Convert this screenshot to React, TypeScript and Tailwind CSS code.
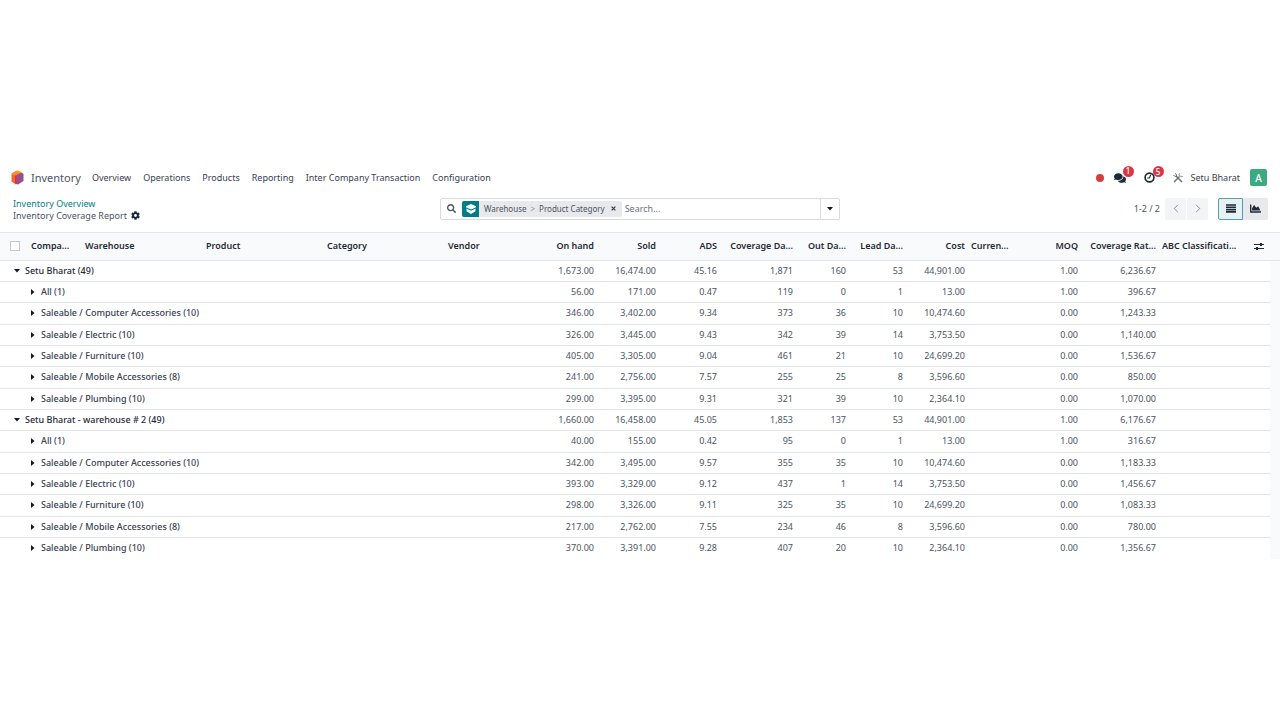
import { FaChartArea, FaCog, FaComments, FaSearch } from "react-icons/fa";

type Row = { label: string; group?: boolean; v: string[] };

const columns: { name: string; width: string; right?: boolean }[] = [
  { name: "Compa...", width: "w-[54px]" },
  { name: "Warehouse", width: "w-[121px]" },
  { name: "Product", width: "w-[121px]" },
  { name: "Category", width: "w-[121px]" },
  { name: "Vendor", width: "w-[79px]" },
  { name: "On hand", width: "w-[67px]", right: true },
  { name: "Sold", width: "w-[62px]", right: true },
  { name: "ADS", width: "w-[61px]", right: true },
  { name: "Coverage Da...", width: "w-[76px]", right: true },
  { name: "Out Da...", width: "w-[53px]", right: true },
  { name: "Lead Da...", width: "w-[57px]", right: true },
  { name: "Cost", width: "w-[62px]", right: true },
  { name: "Curren...", width: "w-[51px] pl-[6px]!" },
  { name: "MOQ", width: "w-[62px]", right: true },
  { name: "Coverage Rat...", width: "w-[78px]", right: true },
  { name: "ABC Classificati...", width: "w-[84px] pl-[6px]!" },
];

const rows: Row[] = [
  { label: "Setu Bharat (49)", group: true, v: ["1,673.00", "16,474.00", "45.16", "1,871", "160", "53", "44,901.00", "1.00", "6,236.67"] },
  { label: "All (1)", v: ["56.00", "171.00", "0.47", "119", "0", "1", "13.00", "1.00", "396.67"] },
  { label: "Saleable / Computer Accessories (10)", v: ["346.00", "3,402.00", "9.34", "373", "36", "10", "10,474.60", "0.00", "1,243.33"] },
  { label: "Saleable / Electric (10)", v: ["326.00", "3,445.00", "9.43", "342", "39", "14", "3,753.50", "0.00", "1,140.00"] },
  { label: "Saleable / Furniture (10)", v: ["405.00", "3,305.00", "9.04", "461", "21", "10", "24,699.20", "0.00", "1,536.67"] },
  { label: "Saleable / Mobile Accessories (8)", v: ["241.00", "2,756.00", "7.57", "255", "25", "8", "3,596.60", "0.00", "850.00"] },
  { label: "Saleable / Plumbing (10)", v: ["299.00", "3,395.00", "9.31", "321", "39", "10", "2,364.10", "0.00", "1,070.00"] },
  { label: "Setu Bharat - warehouse # 2 (49)", group: true, v: ["1,660.00", "16,458.00", "45.05", "1,853", "137", "53", "44,901.00", "1.00", "6,176.67"] },
  { label: "All (1)", v: ["40.00", "155.00", "0.42", "95", "0", "1", "13.00", "1.00", "316.67"] },
  { label: "Saleable / Computer Accessories (10)", v: ["342.00", "3,495.00", "9.57", "355", "35", "10", "10,474.60", "0.00", "1,183.33"] },
  { label: "Saleable / Electric (10)", v: ["393.00", "3,329.00", "9.12", "437", "1", "14", "3,753.50", "0.00", "1,456.67"] },
  { label: "Saleable / Furniture (10)", v: ["298.00", "3,326.00", "9.11", "325", "35", "10", "24,699.20", "0.00", "1,083.33"] },
  { label: "Saleable / Mobile Accessories (8)", v: ["217.00", "2,762.00", "7.55", "234", "46", "8", "3,596.60", "0.00", "780.00"] },
  { label: "Saleable / Plumbing (10)", v: ["370.00", "3,391.00", "9.28", "407", "20", "10", "2,364.10", "0.00", "1,356.67"] },
];

const menu = ["Overview", "Operations", "Products", "Reporting", "Inter Company Transaction", "Configuration"];

function Logo() {
  return (
    <svg viewBox="0 0 26 30" className="h-[15px] w-[13px]" aria-hidden="true">
      <path d="M1 7 11 1l4 0 10 6L13 15Z" fill="#fba12c" />
      <path d="M1 7 10 12v17L1 23Z" fill="#f8622d" />
      <path d="M1 7 9 3l8 3-7 6Z" fill="#fb8a2c" />
      <path d="M10 11 20 5l5 3v14l-11 7-4-1Z" fill="#98508c" />
      <path d="M8 11l3-1v18l-3-1Z" fill="#d3363c" />
    </svg>
  );
}

function Caret({ down }: { down?: boolean }) {
  return (
    <svg viewBox="0 0 6 6" className="size-[6px] shrink-0 fill-[#111827]" aria-hidden="true">
      {down ? <path d="M0 1h6L3 4.500Z" /> : <path d="M1 0v6l3.500-3Z" />}
    </svg>
  );
}

function Badge({ n }: { n: number }) {
  return (
    <span className="absolute -top-[6px] left-[9px] flex size-[11px] items-center justify-center rounded-full bg-[#dc3545] text-[8px] leading-none font-medium text-white">
      {n}
    </span>
  );
}

export default function App() {
  return (
    <div className="flex min-h-screen flex-col justify-center bg-white font-['Noto_Sans','Open_Sans',sans-serif] text-[9px] leading-[12px] text-[#4b5563]">
      <header className="flex h-[32px] items-center justify-between pr-[13px] pl-[11px]">
        <nav className="flex items-center">
          <Logo />
          <a href="#inventory" className="mr-[11px] ml-[7px] text-[11px]">Inventory</a>
          <div className="flex gap-[12px] text-[#374151]">
            {menu.map((m) => (
              <a key={m} href="#menu">{m}</a>
            ))}
          </div>
        </nav>
        <div className="flex items-center text-[#374151]">
          <span className="mr-[10px] size-[8px] rounded-full bg-[#d23f3a]" />
          <button aria-label="Messages" className="relative mr-[18px] text-[#1f2937]">
            <FaComments className="size-[12px]" />
            <Badge n={1} />
          </button>
          <button aria-label="Activities" className="relative mr-[18px] text-[#1f2937]">
            <svg viewBox="0 0 20 20" className="size-[11px]" fill="none" stroke="currentColor" strokeWidth="3" aria-hidden="true">
              <circle cx="10" cy="10" r="8" />
              <path d="m12 5-2 6H6" strokeWidth="2" />
            </svg>
            <Badge n={5} />
          </button>
          <button aria-label="Developer tools" className="mr-[8px] text-[#6b7280]">
            <svg viewBox="0 0 20 20" className="size-[10px]" fill="none" stroke="currentColor" strokeWidth="3" aria-hidden="true">
              <path d="m2 18 11-11M18 18 6 6" />
              <path d="M1 4l3 3 3-1 0-3-3-2M13 1c-2 3 0 6 6 6" strokeWidth="2" />
            </svg>
          </button>
          <a href="#user">Setu Bharat</a>
          <span className="ml-[10px] flex size-[17px] items-center justify-center rounded-[2px] bg-[#3aaa7f] text-[10px] font-medium text-white">A</span>
        </div>
      </header>

      <section className="grid h-[38px] grid-cols-[1fr_400px_1fr] items-start px-[12px]">
        <div className="pt-[4px] pl-px">
          <a href="#overview" className="block text-[#017e84]">Inventory Overview</a>
          <div className="flex items-center gap-[4px]">
            <span>Inventory Coverage Report</span>
            <button aria-label="Actions" className="text-[#1f2937]"><FaCog className="size-[9px]" /></button>
          </div>
        </div>
        <div className="mt-[4px] flex h-[22px] rounded-[2px] border border-[#d8dadd]">
          <div className="flex min-w-0 flex-1 items-center pl-[6px]">
            <FaSearch className="mr-[6px] size-[9px] shrink-0" />
            <div className="flex h-[16px] shrink-0 items-center overflow-hidden rounded-[2px] bg-[#e7e9ed] text-[8px]">
              <span className="flex h-full w-[17px] items-center justify-center bg-[#017e84]">
                <svg viewBox="0 0 18 18" className="size-[10px] fill-white" aria-hidden="true">
                  <path d="M9 0 18 4v2L9 10 0 6V4Z" />
                  <path d="M1 8l8 4 8-4v5l-8 5-8-5Z" />
                </svg>
              </span>
              <span className="pl-[5px]">Warehouse</span>
              <span className="px-[4px] text-[#8b929e]">&gt;</span>
              <span>Product Category</span>
              <button aria-label="Remove" className="px-[6px] text-[#374151]">
                <svg viewBox="0 0 8 8" className="size-[5px]" stroke="currentColor" strokeWidth="2" aria-hidden="true"><path d="m1 1 6 6M7 1 1 7" /></svg>
              </button>
            </div>
            <input aria-label="Search" placeholder="Search..." className="ml-[3px] min-w-0 flex-1 outline-none placeholder:text-[#6b7280]" />
          </div>
          <button aria-label="Search options" className="flex w-[19px] items-center justify-center border-l border-[#d8dadd]"><Caret down /></button>
        </div>
        <div className="mt-[4px] flex items-center justify-end">
          <span className="mr-[5px]">1-2 / 2</span>
          <div className="flex gap-px text-[#7c838f]">
            <button aria-label="Previous" className="flex h-[22px] w-[21px] items-center justify-center rounded-l-[2px] bg-[#f3f4f6]">
              <svg viewBox="0 0 6 10" className="h-[9px] w-[6px]" fill="none" stroke="currentColor" aria-hidden="true"><path d="M5 1 1 5l4 4" /></svg>
            </button>
            <button aria-label="Next" className="flex h-[22px] w-[21px] items-center justify-center rounded-r-[2px] bg-[#f3f4f6]">
              <svg viewBox="0 0 6 10" className="h-[9px] w-[6px]" fill="none" stroke="currentColor" aria-hidden="true"><path d="m1 1 4 4-4 4" /></svg>
            </button>
          </div>
          <div className="ml-[10px] flex text-[#1f2937]">
            <button aria-label="List view" className="flex h-[22px] w-[25px] items-center justify-center rounded-l-[2px] border border-[#4da4a8] bg-[#e6f2f3]">
              <svg viewBox="0 0 10 9" className="h-[9px] w-[10px]" fill="none" stroke="currentColor" strokeWidth="1.600" aria-hidden="true"><path d="M0 1h10M0 3.300h10M0 5.600h10M0 7.900h10" /></svg>
            </button>
            <button aria-label="Graph view" className="flex h-[22px] w-[25px] items-center justify-center rounded-r-[2px] bg-[#e7e9ed]"><FaChartArea className="size-[11px]" /></button>
          </div>
        </div>
      </section>

      <div className="bg-[#f9fafb]">
        <table className="w-full table-fixed border-separate border-spacing-0">
          <thead>
            <tr className="h-[29px] text-left text-[#1f2937] [&>th]:border-y [&>th]:border-[#e3e5e8] [&>th]:p-0 [&>th]:font-semibold [&>th]:whitespace-nowrap">
              <th className="w-[31px]">
                <input type="checkbox" aria-label="Select all" className="ml-[10px] block size-[10px] appearance-none border border-[#c5c8ce] bg-white" />
              </th>
              {columns.map((c) => (
                <th key={c.name} className={`${c.width} ${c.right ? "text-right" : ""}`}>{c.name}</th>
              ))}
              <th className="pl-[14px]!">
                <button aria-label="Columns" className="block">
                  <svg viewBox="0 0 20 18" className="h-[9px] w-[10px]" fill="none" stroke="currentColor" strokeWidth="2" aria-hidden="true">
                    <path d="M0 5h20M0 13h20" /><path d="M14 2v6M6 10v6" strokeWidth="4" />
                  </svg>
                </button>
              </th>
              <th className="w-[10px]" />
            </tr>
          </thead>
          <tbody className="[&>tr]:h-[21px] [&>tr:nth-child(3n)]:h-[22px]">
            {rows.map((r, i) => (
              <tr key={i} className="text-right [&>td]:border-b [&>td]:border-[#e3e5e8] [&>td]:bg-white [&>td]:p-0 [&>th]:border-b [&>th]:border-[#e3e5e8] [&>th]:bg-white [&>th]:p-0 last:[&>td]:border-white last:[&>th]:border-white">
                <th colSpan={6} scope="row" className={r.group ? "font-medium text-[#1f2937]" : "font-medium text-[#374151]"}>
                  <button className={r.group ? "flex items-center gap-[5px] pl-[14px]" : "flex items-center gap-[5px] pl-[30px]"}>
                    <Caret down={r.group} />
                    {r.label}
                  </button>
                </th>
                {r.v.slice(0, 7).map((x, j) => <td key={j}>{x}</td>)}
                <td />
                <td>{r.v[7]}</td>
                <td>{r.v[8]}</td>
                <td />
                <td />
              </tr>
            ))}
          </tbody>
        </table>
      </div>
    </div>
  );
}
